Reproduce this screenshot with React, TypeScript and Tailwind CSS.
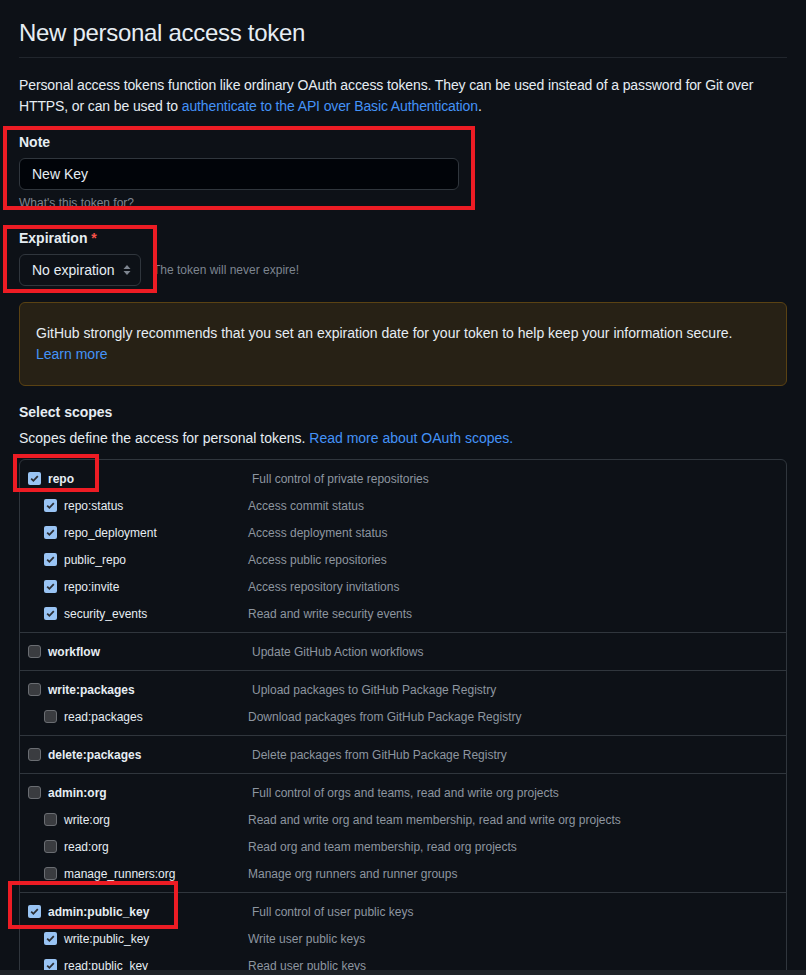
type Scope = { name: string; desc: string; checked?: boolean };
type Group = { main: Scope; subs: Scope[] };

const groups: Group[] = [
    {
        main: { name: "repo", desc: "Full control of private repositories", checked: true },
        subs: [
            { name: "repo:status", desc: "Access commit status", checked: true },
            { name: "repo_deployment", desc: "Access deployment status", checked: true },
            { name: "public_repo", desc: "Access public repositories", checked: true },
            { name: "repo:invite", desc: "Access repository invitations", checked: true },
            { name: "security_events", desc: "Read and write security events", checked: true },
        ],
    },
    {
        main: { name: "workflow", desc: "Update GitHub Action workflows" },
        subs: [],
    },
    {
        main: { name: "write:packages", desc: "Upload packages to GitHub Package Registry" },
        subs: [{ name: "read:packages", desc: "Download packages from GitHub Package Registry" }],
    },
    {
        main: { name: "delete:packages", desc: "Delete packages from GitHub Package Registry" },
        subs: [],
    },
    {
        main: { name: "admin:org", desc: "Full control of orgs and teams, read and write org projects" },
        subs: [
            { name: "write:org", desc: "Read and write org and team membership, read and write org projects" },
            { name: "read:org", desc: "Read org and team membership, read org projects" },
            { name: "manage_runners:org", desc: "Manage org runners and runner groups" },
        ],
    },
    {
        main: { name: "admin:public_key", desc: "Full control of user public keys", checked: true },
        subs: [
            { name: "write:public_key", desc: "Write user public keys", checked: true },
            { name: "read:public_key", desc: "Read user public keys", checked: true },
        ],
    },
];

function Checkbox({ checked }: { checked?: boolean }) {
    if (checked) {
        return (
            <span className="flex h-[13px] w-[13px] shrink-0 items-center justify-center rounded-[2px] bg-[#99c4f4]">
                <svg width="11" height="11" viewBox="0 0 11 11">
                    <path d="M2.2 5.6 4.4 7.8 8.8 3.2" fill="none" stroke="#2b2e33" strokeWidth="1.8" />
                </svg>
            </span>
        );
    }
    return <span className="h-[13px] w-[13px] shrink-0 rounded-[3px] border border-[#6a6d72] bg-[#3a3c40]" />;
}

function ScopeGroup({ group, first }: { group: Group; first: boolean }) {
    return (
        <div className={`py-[5px] ${first ? "" : "border-t border-[#30363d]"}`}>
            <div className="flex h-[27px] items-center pl-2">
                <div className="flex w-[224px] items-center gap-[7px]">
                    <Checkbox checked={group.main.checked} />
                    <span className="font-bold text-[#e6edf3]">{group.main.name}</span>
                </div>
                <span className="text-[#8d96a0]">{group.main.desc}</span>
            </div>
            {group.subs.map(s => (
                <div key={s.name} className="flex h-[27px] items-center pl-6">
                    <div className="flex w-[204px] items-center gap-[7px]">
                        <Checkbox checked={s.checked} />
                        <span className="text-[#e6edf3]">{s.name}</span>
                    </div>
                    <span className="text-[#8d96a0]">{s.desc}</span>
                </div>
            ))}
        </div>
    );
}

export default function App() {
    return (
        <div className="relative flex h-[975px] flex-col overflow-hidden bg-[#0d1117] font-['Liberation_Sans',Arial,sans-serif] text-[#e6edf3]">
            <div className="min-h-0 flex-1 overflow-hidden px-[19px] pt-[15px]">
                {/* HEADER */}
                <h1 className="border-b border-[#21262d] pb-[6px] text-[24px] leading-[36px] font-normal tracking-[-0.3px]">
                    New personal access token
                </h1>

                <p className="mt-[17px] text-[14px] leading-[21px] tracking-[-0.12px]">
                    Personal access tokens function like ordinary OAuth access tokens. They can be used instead of a password for Git over
                    <br />
                    HTTPS, or can be used to{" "}
                    <span className="text-[#4493f8]">authenticate to the API over Basic Authentication</span>.
                </p>

                {/* NOTE */}
                <div className="mt-[15px] text-[14px] leading-[20px] font-bold">Note</div>
                <div className="mt-[6px] flex h-[32px] w-[440px] items-center rounded-[6px] border border-[#30363d] bg-[#010409] px-[12px] text-[14px]">
                    New Key
                </div>
                <div className="mt-[4px] text-[12px] leading-[18px] text-[#7d8590]">What's this token for?</div>

                {/* EXPIRATION */}
                <div className="mt-[16px] text-[14px] leading-[20px] font-bold">
                    Expiration <span className="text-[#f85149]">*</span>
                </div>
                <div className="mt-[6px] flex items-center gap-[12px]">
                    <div className="flex h-[32px] w-[122px] items-center justify-between rounded-[6px] border border-[#30363d] bg-[#0d1117] pr-[8px] pl-[12px] text-[14px]">
                        <span>No expiration</span>
                        <svg width="10" height="14" viewBox="0 0 10 14">
                            <path d="M5 2 8.5 6h-7z M5 12 1.5 8h7z" fill="#7d8590" />
                        </svg>
                    </div>
                    <span className="text-[12px] text-[#7d8590]">The token will never expire!</span>
                </div>

                {/* WARNING */}
                <div className="mt-[16px] rounded-[6px] border border-[#5a4213] bg-[#272115] px-[16px] py-[20px] text-[14px] leading-[21px]">
                    GitHub strongly recommends that you set an expiration date for your token to help keep your information secure.
                    <br />
                    <span className="text-[#4493f8]">Learn more</span>
                </div>

                {/* SCOPES */}
                <div className="mt-[16px] text-[14px] leading-[20px] font-bold">Select scopes</div>
                <p className="mt-[6px] text-[14px] leading-[21px]">
                    Scopes define the access for personal tokens.{" "}
                    <span className="text-[#4493f8]">Read more about OAuth scopes.</span>
                </p>

                <div className="mt-[10px] rounded-t-[6px] border border-[#30363d] text-[12px]">
                    {groups.map((g, i) => (
                        <ScopeGroup key={g.main.name} group={g} first={i === 0} />
                    ))}
                </div>
            </div>

            <div className="h-[5px] shrink-0 bg-[#1f2227]" />

            {/* annotation boxes */}
            <div className="absolute top-[126px] left-[3px] h-[84px] w-[472px] border-4 border-[#ed1c24]" />
            <div className="absolute top-[225px] left-[3px] h-[68px] w-[154px] border-4 border-[#ed1c24]" />
            <div className="absolute top-[454px] left-[13px] h-[38px] w-[86px] border-4 border-[#ed1c24]" />
            <div className="absolute top-[881px] left-[8px] h-[48px] w-[170px] border-4 border-[#ed1c24]" />
        </div>
    );
}
